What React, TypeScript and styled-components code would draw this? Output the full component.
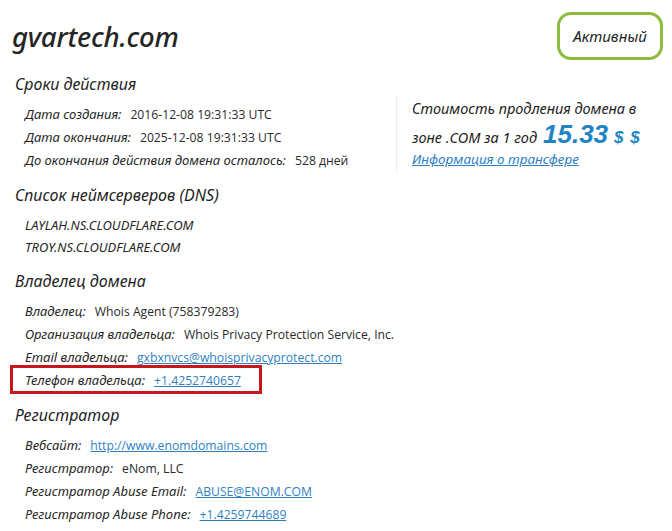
import React from 'react'
import styled, { createGlobalStyle } from 'styled-components'

const GlobalStyle = createGlobalStyle`
	html, body {
		margin: 0;
		padding: 0;
		background: #fff;
	}
	body {
		font-family: 'Noto Sans', 'Open Sans', sans-serif;
		color: #222;
	}
`

const Page = styled.div`
	width: 672px;
	height: 531px;
	box-sizing: border-box;
	padding: 12px 9px 0 12px;
	overflow: hidden;
`

const Header = styled.div`
	display: flex;
	align-items: center;
	justify-content: space-between;
	height: 48px;
`

const DomainTitle = styled.h1`
	margin: 0;
	font-family: 'Noto Sans', sans-serif;
	font-style: italic;
	font-weight: 500;
	font-size: 27.5px;
	color: #252525;
	letter-spacing: -0.2px;
`

const StatusBadge = styled.div`
	box-sizing: border-box;
	width: 106px;
	height: 48px;
	border: 3px solid #8dbb42;
	border-radius: 14px;
	display: flex;
	align-items: center;
	justify-content: center;
	font-style: italic;
	font-size: 15px;
	color: #1e1e1e;
`

const Body = styled.div`
	display: flex;
	margin-top: 12px;
`

const Main = styled.div`
	width: 384px;
	display: flex;
	flex-direction: column;
	gap: 11px;
`

const Section = styled.section``

const SectionTitle = styled.h2`
	margin: 0 0 7px;
	padding-left: 3px;
	font-style: italic;
	font-weight: 400;
	font-size: 16px;
	line-height: 24px;
	color: #1f1f1f;
`

const Row = styled.div<{ $pitch?: number; $highlight?: boolean }>`
	position: relative;
	display: flex;
	align-items: baseline;
	padding-left: 13px;
	line-height: ${(p) => p.$pitch ?? 22}px;
	white-space: nowrap;

	${(p) =>
		p.$highlight &&
		`
		&::after {
			content: '';
			position: absolute;
			left: -2px;
			top: -4px;
			width: 252px;
			height: 29px;
			box-sizing: border-box;
			border: 3px solid #c8161d;
			pointer-events: none;
		}
	`}
`

const Label = styled.span`
	font-style: italic;
	font-size: 13px;
	color: #262626;
	margin-right: 9px;
`

const Value = styled.span`
	font-family: 'Open Sans', sans-serif;
	font-size: 12.2px;
	color: #2a2a2a;
`

const Link = styled.a`
	font-family: 'Open Sans', sans-serif;
	font-size: 12.2px;
	color: #2f7fbf;
	text-decoration: underline;
`

const NsItem = styled.span`
	font-style: italic;
	font-size: 13px;
	color: #262626;
	text-transform: uppercase;
`

const Aside = styled.aside`
	align-self: flex-start;
	margin-top: 24px;
	padding: 0 0 0 15px;
	border-left: 1px solid #ececec;
	height: 76px;
`

const PriceText = styled.div<{ $gap?: number }>`
	display: flex;
	align-items: baseline;
	margin-top: ${(p) => p.$gap ?? 0}px;
	font-style: italic;
	font-size: 14.5px;
	color: #1c1c1c;
	line-height: 24px;
	white-space: nowrap;
`

const Price = styled.span`
	display: inline-block;
	font-family: 'Liberation Sans', Arial, sans-serif;
	font-style: italic;
	font-weight: 700;
	font-size: 26px;
	line-height: 24px;
	color: #1e84c4;
	margin: 0 6px 0 6px;
`

const Currency = styled.span`
	font-family: 'Liberation Sans', Arial, sans-serif;
	font-style: italic;
	font-weight: 700;
	font-size: 17px;
	color: #1e84c4;
	letter-spacing: 1px;
`

const TransferLink = styled.a`
	display: block;
	margin-top: 0;
	font-style: italic;
	font-size: 13.5px;
	color: #2f7fbf;
	text-decoration: underline;
`

export default function App() {
	return (
		<>
			<GlobalStyle />
			<Page>
				<Header>
					<DomainTitle>gvartech.com</DomainTitle>
					<StatusBadge>Активный</StatusBadge>
				</Header>
				<Body>
					<Main>
						<Section>
							<SectionTitle>Сроки действия</SectionTitle>
							<Row>
								<Label>Дата создания:</Label>
								<Value>2016-12-08 19:31:33 UTC</Value>
							</Row>
							<Row>
								<Label>Дата окончания:</Label>
								<Value>2025-12-08 19:31:33 UTC</Value>
							</Row>
							<Row>
								<Label>До окончания действия домена осталось:</Label>
								<Value>528 дней</Value>
							</Row>
						</Section>
						<Section>
							<SectionTitle>Список неймсерверов (DNS)</SectionTitle>
							<Row>
								<NsItem>LAYLAH.NS.CLOUDFLARE.COM</NsItem>
							</Row>
							<Row>
								<NsItem>TROY.NS.CLOUDFLARE.COM</NsItem>
							</Row>
						</Section>
						<Section>
							<SectionTitle>Владелец домена</SectionTitle>
							<Row $pitch={23}>
								<Label>Владелец:</Label>
								<Value>Whois Agent (758379283)</Value>
							</Row>
							<Row $pitch={23}>
								<Label>Организация владельца:</Label>
								<Value>Whois Privacy Protection Service, Inc.</Value>
							</Row>
							<Row $pitch={23}>
								<Label>Email владельца:</Label>
								<Link href="#">gxbxnvcs@whoisprivacyprotect.com</Link>
							</Row>
							<Row $pitch={23} $highlight>
								<Label>Телефон владельца:</Label>
								<Link href="#">+1.4252740657</Link>
							</Row>
						</Section>
						<Section>
							<SectionTitle>Регистратор</SectionTitle>
							<Row $pitch={23}>
								<Label>Вебсайт:</Label>
								<Link href="#">http://www.enomdomains.com</Link>
							</Row>
							<Row $pitch={23}>
								<Label>Регистратор:</Label>
								<Value>eNom, LLC</Value>
							</Row>
							<Row $pitch={23}>
								<Label>Регистратор Abuse Email:</Label>
								<Link href="#">ABUSE@ENOM.COM</Link>
							</Row>
							<Row $pitch={23}>
								<Label>Регистратор Abuse Phone:</Label>
								<Link href="#">+1.4259744689</Link>
							</Row>
						</Section>
					</Main>
					<Aside>
						<PriceText>Стоимость продления домена в</PriceText>
						<PriceText $gap={2}>
							<span>зоне .COM за 1 год</span>
							<Price>15.33</Price>
							<Currency>$ $</Currency>
						</PriceText>
						<TransferLink href="#">Информация о трансфере</TransferLink>
					</Aside>
				</Body>
			</Page>
		</>
	)
}
